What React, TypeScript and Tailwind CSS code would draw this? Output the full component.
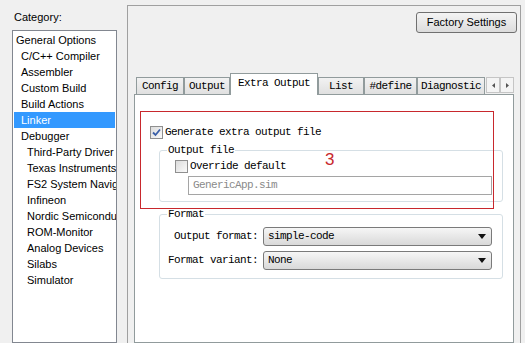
import type { ReactNode } from "react";

const SANS = { fontFamily: '"Liberation Sans", Arial, sans-serif' };
const MONO = { fontFamily: '"Liberation Mono", "Courier New", monospace' };

const ITEMS: { label: string; level: number; selected?: boolean }[] = [
  { label: "General Options", level: 0 },
  { label: "C/C++ Compiler", level: 1 },
  { label: "Assembler", level: 1 },
  { label: "Custom Build", level: 1 },
  { label: "Build Actions", level: 1 },
  { label: "Linker", level: 1, selected: true },
  { label: "Debugger", level: 1 },
  { label: "Third-Party Driver", level: 2 },
  { label: "Texas Instruments", level: 2 },
  { label: "FS2 System Navigator", level: 2 },
  { label: "Infineon", level: 2 },
  { label: "Nordic Semiconductor", level: 2 },
  { label: "ROM-Monitor", level: 2 },
  { label: "Analog Devices", level: 2 },
  { label: "Silabs", level: 2 },
  { label: "Simulator", level: 2 },
];

const TABS = [
  { label: "Config", w: "w-[48px]" },
  { label: "Output", w: "w-[46px]" },
  { label: "Extra Output", w: "w-[88px]", active: true },
  { label: "List", w: "w-[46px]" },
  { label: "#define", w: "w-[53px]" },
  { label: "Diagnostic", w: "w-[68px]" },
];

function CheckBox({ checked }: { checked?: boolean }) {
  return (
    <span className="flex h-[13px] w-[13px] shrink-0 items-center justify-center border border-[#8f8f8f] bg-gradient-to-br from-[#dcdcdc] to-[#fafafa]">
      {checked && (
        <svg width="9" height="9" viewBox="0 0 9 9">
          <path d="M1 4.5 L3.5 7 L8 1.5" fill="none" stroke="#3a5fa8" strokeWidth="1.8" />
        </svg>
      )}
    </span>
  );
}

function Group({ title, className, children }: { title: string; className: string; children: ReactNode }) {
  return (
    <fieldset className={`rounded-[3px] border border-[#d5dfe5] ${className}`}>
      <legend className="ml-[7px] px-[1px] leading-[14px]">{title}</legend>
      {children}
    </fieldset>
  );
}

function Select({ value }: { value: string }) {
  return (
    <div className="flex h-[19px] w-[229px] items-center justify-between rounded-[3px] border border-[#7a7a7a] bg-gradient-to-b from-[#f6f6f6] to-[#d9d9d9] pl-[4px] pr-[5px]">
      <span>{value}</span>
      <svg width="8" height="5" viewBox="0 0 8 5">
        <path d="M0 0 H8 L4 5 Z" fill="#111" />
      </svg>
    </div>
  );
}

export default function App() {
  return (
    <div className="relative flex h-[343px] w-[525px] overflow-hidden bg-[#f0f0f0] text-[11px] text-black" style={SANS}>
      <div className="flex w-[127px] shrink-0 flex-col pl-[12px] pt-[10px]">
        <div className="pl-[2px] leading-[14px]">Category:</div>
        <div className="mt-[6px] w-[105px] flex-1 overflow-hidden border border-[#828790] bg-white pt-[1px]">
          {ITEMS.map((it) => (
            <div
              key={it.label}
              className={`mx-[1px] whitespace-nowrap leading-[16px] ${it.selected ? "bg-[#3399ff] text-white" : ""} ${
                it.level === 0 ? "pl-[2px]" : it.level === 1 ? "pl-[7px]" : "pl-[13px]"
              }`}
            >
              {it.label}
            </div>
          ))}
        </div>
      </div>

      <div className="mt-[5px] flex w-[394px] flex-col border-l border-r border-t border-[#a0a0a0]">
        <div className="flex justify-end pr-[3px] pt-[6px]">
          <button className="h-[21px] w-[101px] rounded-[3px] border border-[#707070] bg-gradient-to-b from-[#f4f4f4] to-[#dcdcdc] text-[11px]">
            Factory Settings
          </button>
        </div>

        <div className="ml-[6px] mt-[40px] flex w-[380px] flex-1 flex-col" style={MONO}>
          <div className="relative z-10 flex h-[21px] items-end pl-[2px] text-[11px] tracking-[-0.6px]">
            {TABS.map((t) =>
              t.active ? (
                <div
                  key={t.label}
                  className={`${t.w} -mb-px flex h-[22px] shrink-0 items-start justify-center border border-b-0 border-[#919b9c] bg-white pt-[2px] leading-[14px]`}
                >
                  {t.label}
                </div>
              ) : (
                <div
                  key={t.label}
                  className={`${t.w} flex h-[17px] shrink-0 items-center justify-center overflow-hidden whitespace-nowrap border border-b-0 border-[#919b9c] bg-gradient-to-b from-[#f2f2f2] to-[#e0e0e0]`}
                >
                  {t.label}
                </div>
              )
            )}
            <div className="mb-[1px] ml-[1px] flex h-[16px]">
              <div className="flex w-[14px] items-center justify-center border border-[#c5c5c5] bg-[#f4f4f4]">
                <svg width="3" height="5" viewBox="0 0 3 5"><path d="M3 0 V5 L0 2.5 Z" fill="#555" /></svg>
              </div>
              <div className="flex w-[14px] items-center justify-center border border-[#c5c5c5] bg-[#f4f4f4]">
                <svg width="3" height="5" viewBox="0 0 3 5"><path d="M0 0 V5 L3 2.5 Z" fill="#555" /></svg>
              </div>
            </div>
          </div>

          <div className="flex-1 border border-[#919b9c] bg-white pl-[15px] pt-[31px] text-[11px] tracking-[-0.6px]">
            <label className="flex items-center gap-[2px] leading-[13px]">
              <CheckBox checked />
              <span>Generate extra output file</span>
            </label>

            <Group title="Output file" className="ml-[9px] mt-[4px] w-[344px] pb-[6px]">
              <label className="ml-[15px] mt-[3px] flex items-center gap-[2px] leading-[13px]">
                <CheckBox />
                <span>Override default</span>
              </label>
              <div className="ml-[28px] mt-[3px] flex h-[19px] w-[304px] items-center border border-[#a5a5a5] pl-[4px] text-[#8a8a8a]">
                GenericApp.sim
              </div>
            </Group>

            <Group title="Format" className="ml-[9px] mt-[5px] w-[344px] pb-[8px]">
              <div className="mt-[6px] flex items-center">
                <span className="w-[103px] pr-[5px] text-right">Output format:</span>
                <Select value="simple-code" />
              </div>
              <div className="mt-[5px] flex items-center">
                <span className="w-[103px] pr-[5px] text-right">Format variant:</span>
                <Select value="None" />
              </div>
            </Group>
          </div>
        </div>
      </div>

      <div className="absolute left-[140px] top-[111px] h-[98px] w-[354px] border border-[#c8282d]" />
      <div className="absolute left-[325px] top-[150px] text-[17px] leading-[20px] text-[#c8282d]">3</div>
    </div>
  );
}
